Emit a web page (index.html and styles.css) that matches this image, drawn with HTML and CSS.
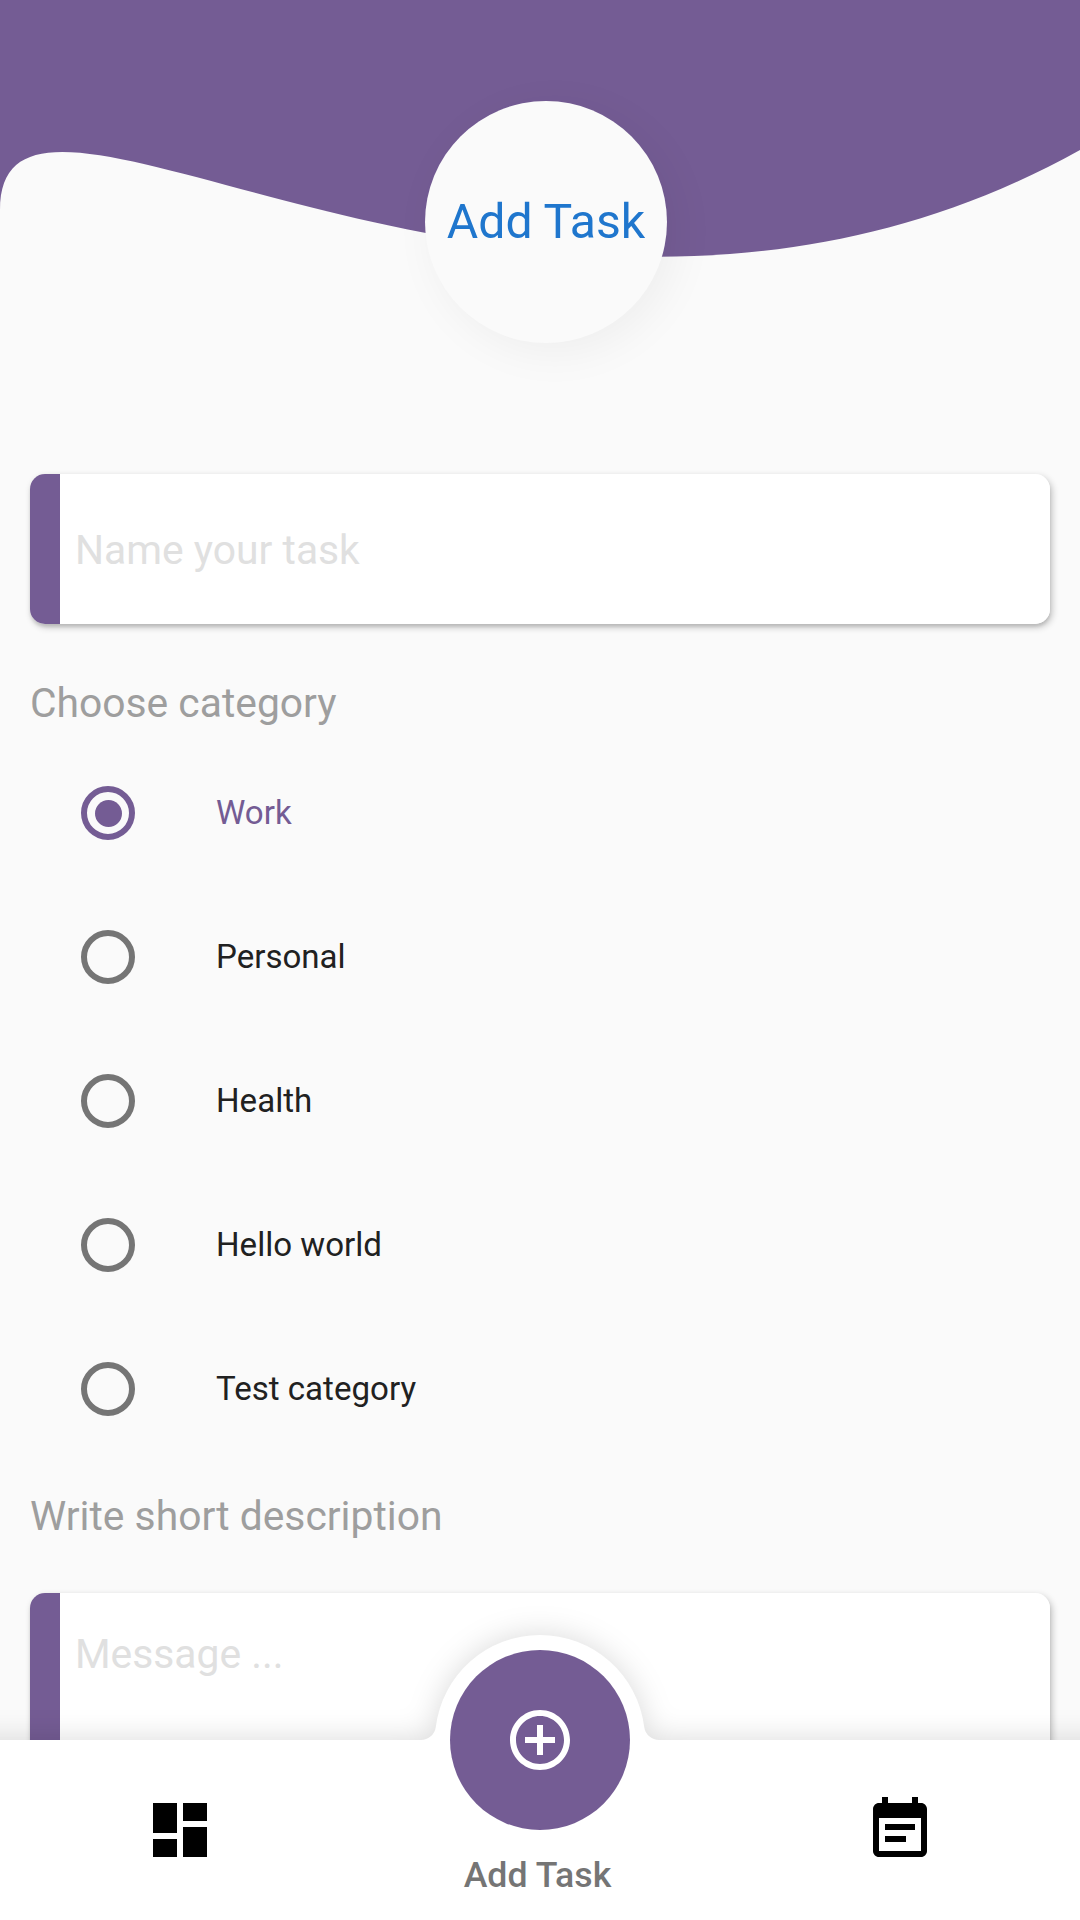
FILE: index.html
```html
<!DOCTYPE html>
<html lang="en">
<head>
<meta charset="utf-8">
<title>Add Task</title>
<link rel="stylesheet" href="styles.css">
</head>
<body>
<div class="screen">
  <header class="header">
    <svg class="wave" viewBox="0 0 1080 300" aria-hidden="true"><path d="M0 0V210C0 0 540 450 1080 150V0Z"/></svg>
    <h1 class="badge">Add Task</h1>
  </header>
  <main class="form">
    <div class="card card-name"><span class="placeholder">Name your task</span></div>
    <h2 class="label">Choose category</h2>
    <ul class="options">
      <li class="option selected"><span class="radio"></span><span class="option-text">Work</span></li>
      <li class="option"><span class="radio"></span><span class="option-text">Personal</span></li>
      <li class="option"><span class="radio"></span><span class="option-text">Health</span></li>
      <li class="option"><span class="radio"></span><span class="option-text">Hello world</span></li>
      <li class="option"><span class="radio"></span><span class="option-text">Test category</span></li>
    </ul>
    <h2 class="label label-desc">Write short description</h2>
    <div class="card card-message"><span class="placeholder">Message ...</span></div>
  </main>
  <nav class="nav">
    <svg class="nav-shape" viewBox="0 0 1080 330" aria-hidden="true"><path d="M-60 150H420A15 15 0 0 0 435.8 137A105 105 0 0 1 644.2 137A15 15 0 0 0 660 150H1140V400H-60Z"/></svg>
    <a class="tab"><svg class="icon" viewBox="0 0 24 24"><path d="M3 13h8V3H3v10zm0 8h8v-6H3v6zm10 0h8V11h-8v10zm0-18v6h8V3h-8z"/></svg></a>
    <a class="tab tab-active">
      <span class="fab"><svg class="icon" viewBox="0 0 24 24"><path d="M13 7h-2v4H7v2h4v4h2v-4h4v-2h-4V7zm-1-5C6.480 2 2 6.480 2 12s4.480 10 10 10 10-4.480 10-10S17.520 2 12 2zm0 18c-4.410 0-8-3.590-8-8s3.590-8 8-8 8 3.590 8 8-3.590 8-8 8z"/></svg></span>
      <span class="tab-label">Add Task</span>
    </a>
    <a class="tab"><svg class="icon" viewBox="0 0 24 24"><path d="M17 10H7v2h10v-2zm2-7h-1V1h-2v2H8V1H6v2H5c-1.110 0-1.990.9-1.990 2L3 19c0 1.100.89 2 2 2h14c1.100 0 2-.9 2-2V5c0-1.100-.9-2-2-2zm0 16H5V8h14v11zm-5-5H7v2h7v-2z"/></svg></a>
  </nav>
</div>
</body>
</html>
```
FILE: styles.css
```css
* { box-sizing: border-box; }
body { margin: 0; font-family: Roboto, sans-serif; }
h1, h2, ul { margin: 0; padding: 0; font-weight: 400; list-style: none; }

.screen {
  position: relative;
  width: 1080px;
  height: 1920px;
  overflow: hidden;
  background: #fafafa;
}

.header {
  position: relative;
  height: 474px;
  padding: 101px 0 0 425px;
}
.wave { position: absolute; top: 0; left: 0; width: 1080px; height: 300px; fill: #745c94; }
.badge {
  position: relative;
  display: flex;
  align-items: center;
  justify-content: center;
  width: 242px;
  height: 242px;
  padding-bottom: 2px;
  border-radius: 50%;
  background: #fafafa;
  box-shadow: 9px 9px 45px rgba(0, 0, 0, .05);
  color: #1f76cd;
  font-size: 48.2px;
}

.form { padding: 0 30px; }
.card {
  position: relative;
  display: flex;
  border-radius: 15px;
  background: linear-gradient(90deg, #745c94 30px, #fff 30px);
  box-shadow: 0 3px 3px rgba(0, 0, 0, .08), 2px 3px 7px rgba(0, 0, 0, .24);
  padding-left: 45px;
}
.card-name { height: 150px; align-items: center; padding-top: 1px; }
.card-message { height: 300px; padding-top: 37px; }
.placeholder { font-size: 40.8px; line-height: 48px; color: #e0e0e0; }
.label { margin-top: 55px; font-size: 40.8px; line-height: 48px; color: #9e9e9e; }

.options { margin-top: 14px; }
.option {
  display: flex;
  align-items: center;
  gap: 81px;
  height: 144px;
  padding-left: 51px;
  font-size: 33.1px;
  color: #212121;
}
.option-text { padding-bottom: 2px; }
.radio {
  display: flex;
  align-items: center;
  justify-content: center;
  width: 54px;
  height: 54px;
  border: 6px solid #757575;
  border-radius: 50%;
}
.selected { color: #745c94; }
.selected .radio { border-color: #745c94; }
.selected .radio::after { content: ""; width: 27px; height: 27px; border-radius: 50%; background: #745c94; }
.label-desc { margin: 31px 0 53px; }

.nav {
  position: absolute;
  left: 0;
  bottom: 0;
  display: flex;
  width: 1080px;
  height: 180px;
}
.nav-shape {
  position: absolute;
  left: 0;
  bottom: 0;
  width: 1080px;
  height: 330px;
  overflow: visible;
  fill: #fff;
  filter: drop-shadow(0 0 15px rgba(0, 0, 0, .15));
}
.tab {
  position: relative;
  display: flex;
  flex: 1;
  flex-direction: column;
  align-items: center;
  justify-content: center;
}
.icon { width: 72px; height: 72px; fill: #000; }
.tab-active { justify-content: flex-start; }
.fab {
  display: flex;
  align-items: center;
  justify-content: center;
  flex: none;
  width: 180px;
  height: 180px;
  margin-top: -90px;
  border-radius: 50%;
  background: #745c94;
}
.fab .icon { fill: #fff; }
.tab-label { margin-top: 24px; padding-right: 5px; font-size: 35.7px; line-height: 42px; font-weight: 500; color: #757575; }
```
